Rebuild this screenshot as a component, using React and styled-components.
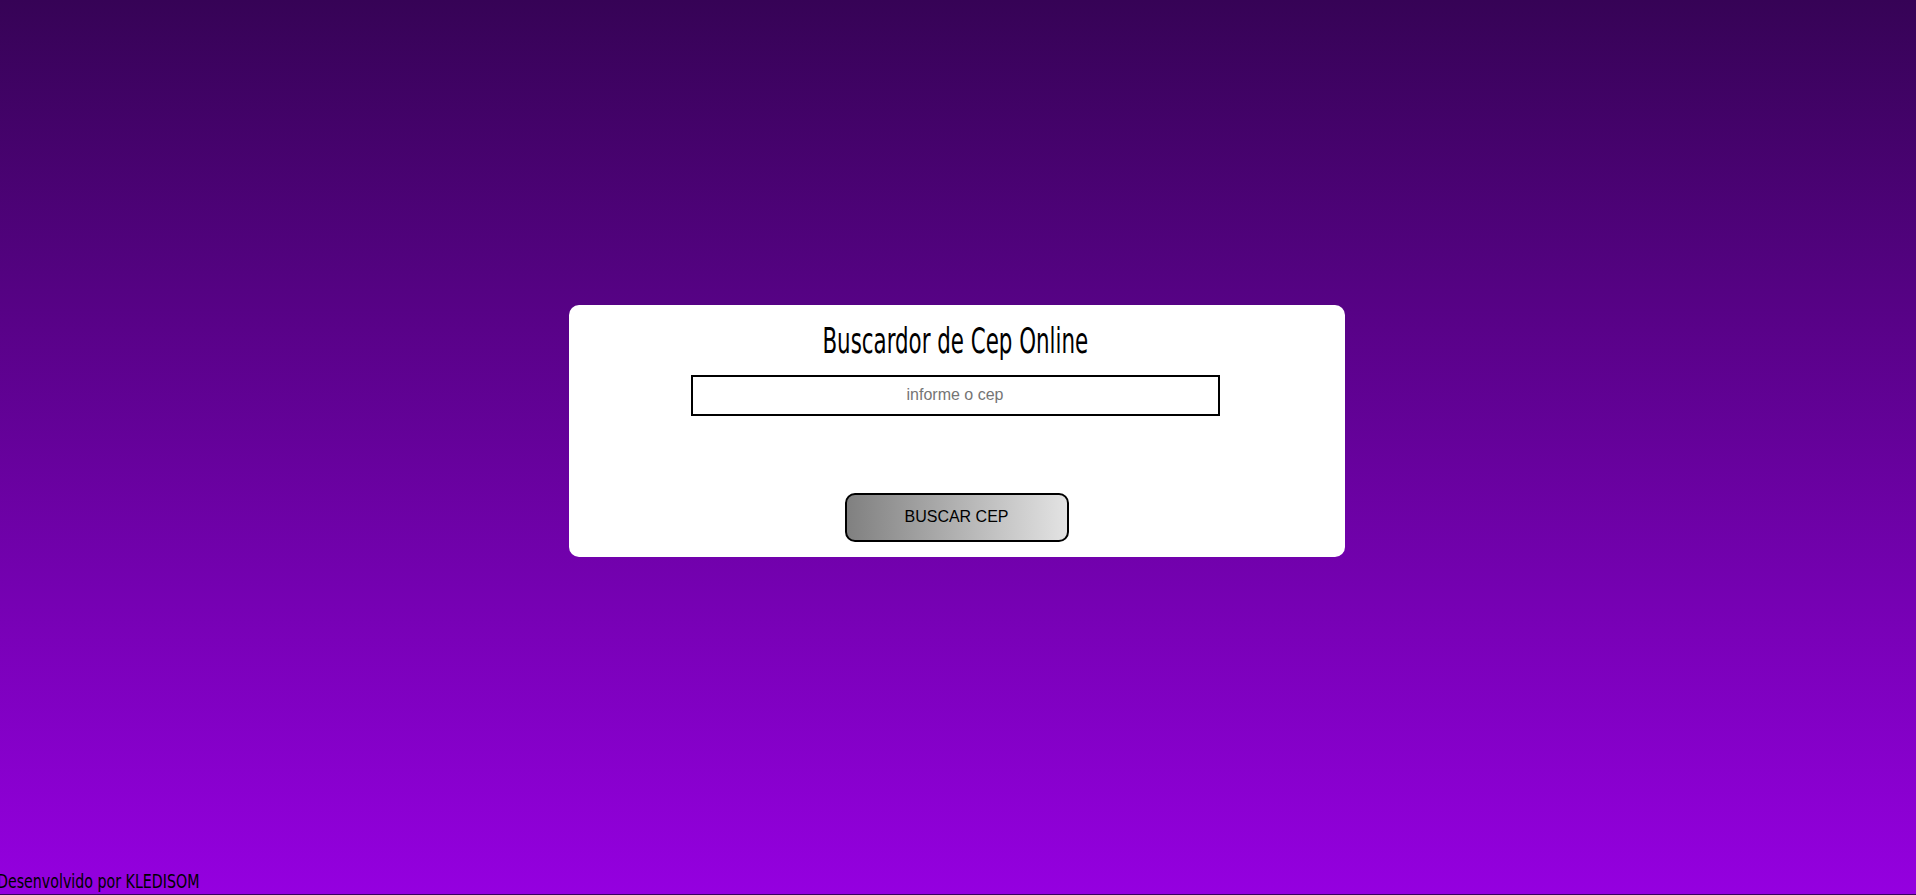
import styled, {createGlobalStyle} from "styled-components";
import {useState} from "react";

const GlobalStyle = createGlobalStyle`
  html, body, #root {
    margin: 0;
    height: 100%;
  }
  body {
    font-family: "Liberation Sans", Arial, sans-serif;
  }
`;

const Page = styled.div`
  height: 100%;
  box-sizing: border-box;
  display: flex;
  flex-direction: column;
  background: linear-gradient(to bottom, #360356, #9500e0);
  border-bottom: 1px solid #3a0060;
`;

const Main = styled.main`
  flex: 1;
  display: flex;
  align-items: center;
  justify-content: center;
`;

const Card = styled.div`
  width: 776px;
  margin-right: 3px;
  box-sizing: border-box;
  background: #fff;
  border-radius: 10px;
  padding: 14px 0 15px;
  display: flex;
  flex-direction: column;
  align-items: center;
`;

const Title = styled.h1`
  margin: 0 3px 0 0;
  font-family: "DejaVu Sans Condensed", "DejaVu Sans", sans-serif;
  font-stretch: condensed;
  font-weight: 400;
  font-size: 36px;
  line-height: 44px;
  color: #000;
  transform: scaleX(0.66);
  white-space: nowrap;
`;

const Input = styled.input`
  margin: 12px 3px 0 0;
  width: 529px;
  height: 41px;
  box-sizing: border-box;
  border: 2px solid #000;
  outline: none;
  text-align: center;
  font-family: "Liberation Sans", Arial, sans-serif;
  font-size: 16px;
  &::placeholder {
    color: #757575;
  }
`;

const Button = styled.button`
  margin-top: 77px;
  width: 224px;
  height: 49px;
  box-sizing: border-box;
  border: 2px solid #000;
  border-radius: 10px;
  background: linear-gradient(to right, #808080, #e3e3e3);
  font-family: "Liberation Sans", Arial, sans-serif;
  font-size: 16px;
  color: #000;
  cursor: pointer;
`;

const Footer = styled.footer`
  height: 33px;
  display: flex;
  align-items: flex-end;
  margin-left: -3px;
`;

const Credit = styled.span`
  font-family: "DejaVu Sans Condensed", "DejaVu Sans", sans-serif;
  font-stretch: condensed;
  font-size: 20px;
  line-height: 26px;
  color: #000;
  white-space: nowrap;
  transform: scaleX(0.79);
  transform-origin: left center;
`;

export default function App() {
    const [cep, setCep] = useState("");
    return (
        <>
            <GlobalStyle/>
            <Page>
                <Main>
                    <Card>
                        <Title>Buscardor de Cep Online</Title>
                        <Input placeholder="informe o cep" value={cep} onChange={e => setCep(e.target.value)}/>
                        <Button>BUSCAR CEP</Button>
                    </Card>
                </Main>
                <Footer>
                    <Credit>Desenvolvido por KLEDISOM</Credit>
                </Footer>
            </Page>
        </>
    );
}
